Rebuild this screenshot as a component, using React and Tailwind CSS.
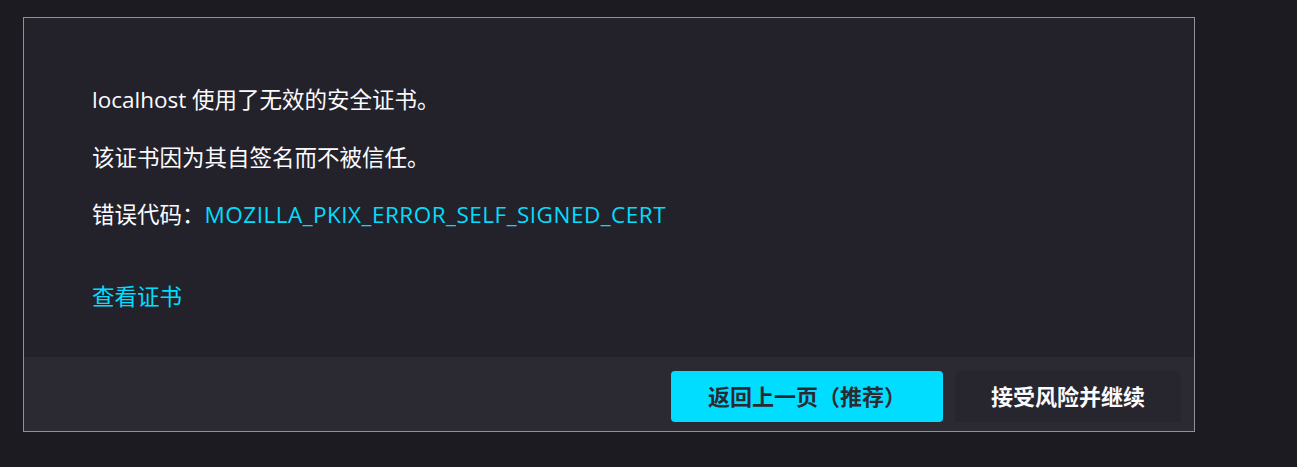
export default function App() {
  return (
    <div
      className="min-h-[467px] w-full bg-[#1c1b22] pt-[17px] pl-[23px]"
      style={{ fontFamily: '"Open Sans", "Noto Sans CJK SC", sans-serif' }}
    >
      <div className="flex h-[415px] w-[1172px] flex-col border border-[#8f8f9d] bg-[#23222b]">
        <div className="flex-1 pl-[68px] pt-[65px] text-[22.5px] leading-[34px] text-[#fbfbfe]">
          <p>localhost 使用了无效的安全证书。</p>
          <p className="mt-[24px]">该证书因为其自签名而不被信任。</p>
          <p className="mt-[23px]">
            错误代码：
            <a href="#" className="tracking-[0.5px] text-[#00ddff]">
              MOZILLA_PKIX_ERROR_SELF_SIGNED_CERT
            </a>
          </p>
          <p className="mt-[48px]">
            <a href="#" className="text-[#00ddff]">
              查看证书
            </a>
          </p>
        </div>
        <div className="flex justify-end gap-[12px] bg-[#2b2a33] pb-[9px] pr-[13px] pt-[14px]">
          <button
            type="button"
            className="h-[51px] w-[272px] rounded-[4px] bg-[#00ddff] text-[22px] font-bold text-[#2b2a33]"
          >
            返回上一页（推荐）
          </button>
          <button
            type="button"
            className="h-[51px] w-[226px] rounded-[4px] bg-[#27262e] text-[22px] font-bold text-[#fbfbfe]"
          >
            接受风险并继续
          </button>
        </div>
      </div>
    </div>
  );
}
